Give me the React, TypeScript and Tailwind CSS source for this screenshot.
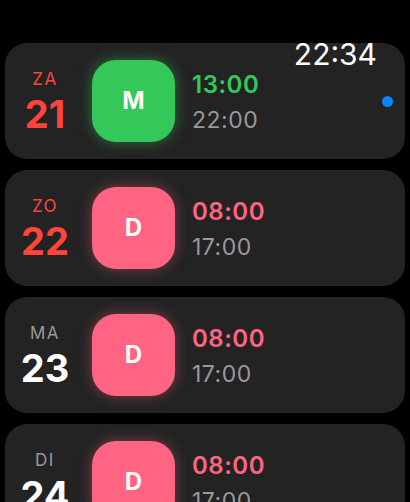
const shifts = [
  { day: "ZA", date: "21", dayColor: "text-[#ff453a]", dateColor: "text-[#ff453a]", code: "M", badge: "bg-[#34c759] shadow-[0_0_14px_rgba(52,199,89,0.5)]", start: "13:00", startColor: "text-[#34c759]", end: "22:00", dot: true },
  { day: "ZO", date: "22", dayColor: "text-[#ff453a]", dateColor: "text-[#ff453a]", code: "D", badge: "bg-[#ff6482] shadow-[0_0_14px_rgba(255,100,130,0.4)]", start: "08:00", startColor: "text-[#ff6482]", end: "17:00", dot: false },
  { day: "MA", date: "23", dayColor: "text-[#98989d]", dateColor: "text-white", code: "D", badge: "bg-[#ff6482] shadow-[0_0_14px_rgba(255,100,130,0.4)]", start: "08:00", startColor: "text-[#ff6482]", end: "17:00", dot: false },
  { day: "DI", date: "24", dayColor: "text-[#98989d]", dateColor: "text-white", code: "D", badge: "bg-[#ff6482] shadow-[0_0_14px_rgba(255,100,130,0.4)]", start: "08:00", startColor: "text-[#ff6482]", end: "17:00", dot: false },
];

const App = () => {
  return (
    <div className="relative h-[502px] overflow-hidden bg-black font-['Inter',sans-serif]">
      <div className="flex flex-col gap-[11px] px-[5px] pt-[43px]">
        {shifts.map((s) => (
          <div
            key={s.date}
            className="flex h-[116px] shrink-0 items-center rounded-[22px] bg-[#232323]"
          >
            <div className="flex w-[80px] flex-col items-center gap-[5px]">
              <span className={`text-[17px] leading-[20px] tracking-[1.5px] ${s.dayColor}`}>
                {s.day}
              </span>
              <span className={`text-[38px] font-bold leading-[40px] ${s.dateColor}`}>
                {s.date}
              </span>
            </div>
            <div
              className={`ml-[7px] flex h-[82px] w-[83px] items-center justify-center rounded-[24px] ${s.badge}`}
            >
              <span className="text-[24px] font-bold text-white">{s.code}</span>
            </div>
            <div className="ml-[17px] mt-[3px] flex flex-col gap-[7px]">
              <span className={`text-[24px] font-semibold leading-[28px] tracking-[0.5px] ${s.startColor}`}>
                {s.start}
              </span>
              <span className="text-[23px] leading-[28px] tracking-[0.5px] text-[#98989d]">
                {s.end}
              </span>
            </div>
            {s.dot && (
              <div className="ml-auto mr-[12px] h-[11px] w-[11px] rounded-full bg-[#0a84ff]" />
            )}
          </div>
        ))}
      </div>
      <div className="absolute right-[33px] top-[36px] text-[30px] leading-[36px] text-white">
        22:34
      </div>
    </div>
  );
};

export default App;
